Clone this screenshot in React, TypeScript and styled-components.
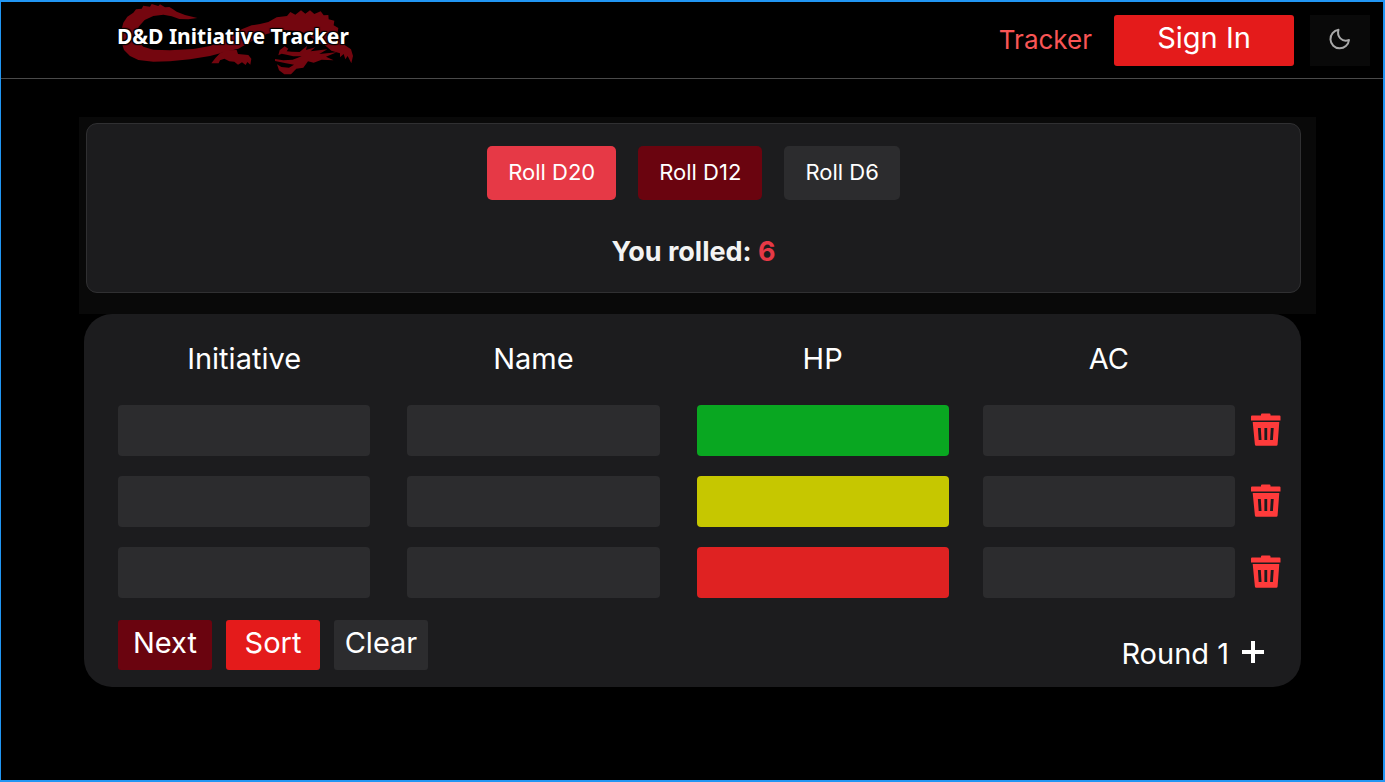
import React, { useState } from "react";
import styled, { createGlobalStyle, css } from "styled-components";

const GlobalStyle = createGlobalStyle`
  *, *::before, *::after { box-sizing: border-box; }
  body { margin: 0; background: #000; color: #fff; font-family: Inter, "Liberation Sans", sans-serif; }
  button, input { font: inherit; color: inherit; }
`;

const Page = styled.div`
  min-height: 100vh;
  background: #000;
  border: 2px solid #2196f3;
  border-left-width: 1px;
`;

const Header = styled.header`
  display: flex;
  align-items: center;
  justify-content: space-between;
  height: 77px;
  padding: 0 13px 0 115px;
  border-bottom: 1px solid #4a4a4a;
`;

const Brand = styled.a`
  display: grid;
  align-items: center;
  color: #fff;
  text-decoration: none;
  > * { grid-area: 1 / 1; }
`;

const BrandName = styled.span`
  padding: 0 0 8px 1px;
  font: 700 21px/24px "Noto Sans", "Open Sans", sans-serif;
  text-shadow: 1px 1px 1px #000, -1px -1px 1px #000, 1px -1px 1px #000, -1px 1px 1px #000;
  white-space: nowrap;
`;

const Nav = styled.nav`
  display: flex;
  align-items: center;
  gap: 16px;
`;

const NavLink = styled.a`
  margin-right: 6px;
  color: #f95555;
  font-size: 26px;
  font-weight: 400;
  line-height: 32px;
  text-decoration: none;
`;

type Tone = "red" | "coral" | "maroon" | "grey";
const tones: Record<Tone, string> = {
  red: "#e41b1b",
  coral: "#e63946",
  maroon: "#6a040f",
  grey: "#2c2c2e",
};

const Button = styled.button<{ $tone: Tone }>`
  height: 50px;
  padding: 0 0 4px;
  border: 0;
  border-radius: 3px;
  background: ${(p) => tones[p.$tone]};
  font-size: 29px;
  font-weight: 400;
  line-height: 36px;
  cursor: pointer;
`;

const SignIn = styled(Button)`
  width: 180px;
  height: 51px;
`;

const ThemeToggle = styled.button`
  display: grid;
  place-items: center;
  width: 60px;
  height: 51px;
  padding: 0 0 2px;
  border: 0;
  background: #090909;
  color: #a8a8a8;
  cursor: pointer;
`;

const Main = styled.main`
  padding: 38px 67px 0 78px;
`;

const DicePanel = styled.section`
  padding: 6px 15px 21px 7px;
  background: #090909;
`;

const DiceCard = styled.div`
  display: flex;
  flex-direction: column;
  align-items: center;
  gap: 36px;
  padding: 22px 20px 24px;
  border: 1px solid #303032;
  border-radius: 11px;
  background: #1c1c1e;
`;

const DiceRow = styled.div`
  display: flex;
  gap: 22px;
`;

const DieButton = styled(Button)`
  height: 54px;
  padding: 0 21px 2px;
  border-radius: 5px;
  font-size: 22px;
`;

const Result = styled.p`
  margin: 0;
  color: #f3f3f3;
  font-size: 27px;
  font-weight: 700;
  line-height: 32px;
  strong { color: #e63946; font-weight: 700; }
`;

const Tracker = styled.section`
  margin: 0 15px 0 5px;
  padding: 25px 20px 17px 34px;
  border-radius: 28px;
  background: #1c1c1e;
`;

const Table = styled.table`
  display: block;
  thead, tbody { display: block; }
  thead { padding-bottom: 6px; }
`;

const Row = styled.tr`
  display: flex;
  align-items: center;
  margin-bottom: 20px;
`;

const cell = css`
  flex: 1 1 0;
  min-width: 0;
  margin-right: 37px;
  padding: 0;
  &:nth-child(3) { margin-right: 34px; }
  &:nth-child(4) { margin-right: 16px; }
  &:nth-child(5) { flex: 0 0 30px; margin-right: 0; }
`;

const HeadCell = styled.th`
  ${cell}
  font-size: 29px;
  font-weight: 400;
  line-height: 40px;
`;

const Cell = styled.td`
  ${cell}
`;

const Field = styled.input<{ $fill?: string }>`
  display: block;
  width: 100%;
  height: 51px;
  padding: 0 12px;
  border: 0;
  border-radius: 4px;
  background: ${(p) => p.$fill ?? "#2c2c2e"};
  font-size: 22px;
  text-align: center;
`;

const IconButton = styled.button`
  display: block;
  padding: 0;
  border: 0;
  background: none;
  cursor: pointer;
`;

const DeleteButton = styled(IconButton)`
  padding-top: 2px;
`;

const Footer = styled.div`
  display: flex;
  align-items: center;
  justify-content: space-between;
  padding: 2px 16px 0 0;
`;

const Actions = styled.div`
  display: flex;
  gap: 14px;
`;

const ActionButton = styled(Button)`
  width: 94px;
`;

const Round = styled.div`
  display: flex;
  align-items: center;
  gap: 12px;
  padding-top: 18px;
  font-size: 29px;
  font-weight: 400;
  line-height: 32px;
`;

const Dragon = () => (
  <svg width="240" height="72" viewBox="18 12 720 216" fill="#74060f" aria-hidden="true">
    <path d="M262 54L225 45L200 35L188 27L178 21L165 22L150 13L145 18L125 12L120 20L100 17L95 26L78 28L70 38L52 50L40 68L34 90V125L42 150L60 168L85 180L130 185L180 184L240 178L300 168L345 156L385 146L425 124L470 102L520 90L570 94L600 108L622 128L645 136L664 152L690 160L690 172L701 162L706 178L713 168L724 190L729 168L723 148L705 136L695 118L682 102L685 84L671 76L673 62L656 58L655 45L641 46L632 34L613 42L600 31L586 41L573 31L556 44L541 36L531 48L500 52L475 66L450 72L425 76L395 88L365 108L335 124L300 138L250 147L180 151L130 149L100 140L84 122L79 102L86 80L104 60L130 48L160 44L185 49L208 57L235 58Z" />
    <path d="M304 190L317 173L330 160L350 151L380 150L384 162L415 165L424 176L421 194L412 186L407 195L396 187L384 194L373 185L358 184L343 176L330 181L326 190Z" />
    <path d="M505 166L509 151L524 139L535 146L530 154L545 155L569 156L591 137L588 150L616 142L602 154L652 148L628 162L680 157L648 170L671 181L635 179L611 188L594 184L580 203L559 206L543 223L523 223L507 211L501 193L514 201L537 203L552 194L528 190L495 183V177L520 181L548 179L575 169L550 169L530 164L515 161Z" />
  </svg>
);

const Moon = () => (
  <svg width="24" height="24" viewBox="0 0 24 24" fill="none" stroke="currentColor" strokeWidth="2" strokeLinejoin="round" aria-hidden="true">
    <path d="M10.500 2.800C8.500 9.500 14 15.500 21 13A9.300 9.300 0 1 1 10.500 2.800Z" />
  </svg>
);

const Trash = () => (
  <svg width="30" height="33" viewBox="0 0 30 33" aria-hidden="true">
    <path fill="#ff3b3b" fillRule="evenodd" d="M1 2.500H10V1.500Q10 .5 11 .5H18.500Q19.500 .5 19.500 1.500V2.500H28.500Q29.500 2.500 29.500 3.500V7.500H0V3.500Q0 2.500 1 2.500ZM1.700 9H28.300L26.600 31.500Q26.500 32.700 25.300 32.700H5.200Q4 32.700 3.900 31.500ZM6.900 15L7.700 27H10.500L9.800 15ZM13.400 15V27H16.200V15ZM19.800 15L19.100 27H21.900L22.700 15Z" />
  </svg>
);

const Plus = () => (
  <svg width="24" height="24" viewBox="0 0 24 24" fill="none" stroke="#fff" strokeWidth="4" aria-hidden="true">
    <path d="M12 1V23M1 12H23" />
  </svg>
);

const columns = ["Initiative", "Name", "HP", "AC"];
const healthColors = ["#09a721", "#c6c700", "#df2222"];
const dice: { sides: number; tone: Tone }[] = [
  { sides: 20, tone: "coral" },
  { sides: 12, tone: "maroon" },
  { sides: 6, tone: "grey" },
];

export default function App() {
  const [rolled, setRolled] = useState(6);
  const [round, setRound] = useState(1);

  return (
    <Page>
      <GlobalStyle />
      <Header>
        <Brand href="#">
          <Dragon />
          <BrandName>D&amp;D Initiative Tracker</BrandName>
        </Brand>
        <Nav>
          <NavLink href="#tracker">Tracker</NavLink>
          <SignIn $tone="red">Sign In</SignIn>
          <ThemeToggle aria-label="Toggle theme"><Moon /></ThemeToggle>
        </Nav>
      </Header>
      <Main>
        <DicePanel>
          <DiceCard>
            <DiceRow>
              {dice.map((d) => (
                <DieButton key={d.sides} $tone={d.tone} onClick={() => setRolled(1 + Math.floor(Math.random() * d.sides))}>
                  Roll D{d.sides}
                </DieButton>
              ))}
            </DiceRow>
            <Result>You rolled: <strong>{rolled}</strong></Result>
          </DiceCard>
        </DicePanel>
        <Tracker id="tracker">
          <Table>
            <thead>
              <Row>
                {columns.map((c) => <HeadCell key={c} scope="col">{c}</HeadCell>)}
                <HeadCell as="td" />
              </Row>
            </thead>
            <tbody>
              {healthColors.map((color, i) => (
                <Row key={color}>
                  {columns.map((c) => (
                    <Cell key={c}>
                      <Field aria-label={`${c}, row ${i + 1}`} $fill={c === "HP" ? color : undefined} />
                    </Cell>
                  ))}
                  <Cell>
                    <DeleteButton aria-label={`Delete row ${i + 1}`}><Trash /></DeleteButton>
                  </Cell>
                </Row>
              ))}
            </tbody>
          </Table>
          <Footer>
            <Actions>
              <ActionButton $tone="maroon" onClick={() => setRound(round + 1)}>Next</ActionButton>
              <ActionButton $tone="red">Sort</ActionButton>
              <ActionButton $tone="grey">Clear</ActionButton>
            </Actions>
            <Round>
              <span>Round {round}</span>
              <IconButton aria-label="Add combatant"><Plus /></IconButton>
            </Round>
          </Footer>
        </Tracker>
      </Main>
    </Page>
  );
}
